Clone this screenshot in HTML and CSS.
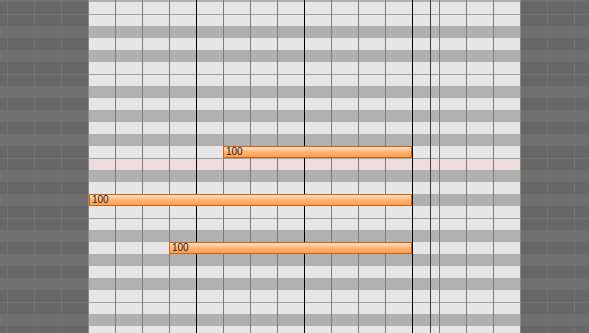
FILE: index.html
```html
<!DOCTYPE html>
<html lang="en">
<head>
    <meta charset="UTF-8">
    <meta name="viewport" content="width=device-width, initial-scale=1.0">
    <title>Piano Roll</title>
    <link rel="stylesheet" href="styles.css">
</head>
<body>
    <div class="roll">
        <div class="rows">
            <div class="row b"></div>
            <div class="row w"></div>
            <div class="row w s"></div>
            <div class="row b"></div>
            <div class="row w"></div>
            <div class="row b"></div>
            <div class="row w"></div>
            <div class="row w s"></div>
            <div class="row b"></div>
            <div class="row w"></div>
            <div class="row b"></div>
            <div class="row w"></div>
            <div class="row b"></div>
            <div class="row w">
                <div class="note" style="margin-left: 223px; width: 189px;">100</div>
            </div>
            <div class="row w s hl"></div>
            <div class="row b"></div>
            <div class="row w"></div>
            <div class="row b">
                <div class="note" style="margin-left: 89px; width: 323px;">100</div>
            </div>
            <div class="row w"></div>
            <div class="row w s"></div>
            <div class="row b"></div>
            <div class="row w">
                <div class="note" style="margin-left: 169px; width: 243px;">100</div>
            </div>
            <div class="row b"></div>
            <div class="row w"></div>
            <div class="row b"></div>
            <div class="row w"></div>
            <div class="row w s"></div>
            <div class="row b"></div>
            <div class="row w"></div>
        </div>

        <!-- beat / bar lines drawn over the lanes -->
        <div class="beats">
            <div class="beat edge"></div>
            <div class="beat"></div>
            <div class="beat"></div>
            <div class="beat"></div>
            <div class="beat bar"></div>
            <div class="beat"></div>
            <div class="beat"></div>
            <div class="beat"></div>
            <div class="beat bar"></div>
            <div class="beat"></div>
            <div class="beat"></div>
            <div class="beat"></div>
            <div class="beat bar"></div>
            <div class="beat"></div>
            <div class="beat"></div>
            <div class="beat"></div>
            <div class="beat edge last"></div>
            <div class="end-marker"></div>
        </div>
    </div>
</body>
</html>
```

FILE: styles.css
```css
body {
    margin: 0;
    padding: 0;
    overflow: hidden;
    background-color: #6a6b6a;
    font-family: "Liberation Sans", Arial, sans-serif;
}

.roll {
    position: relative;
    width: 589px;
    height: 333px;
    overflow: hidden;
}

.rows {
    display: flex;
    flex-direction: column;
    margin-top: -10px;
}

.row {
    --pad: #666766;
    --pad-line: #727372;
    --lane: #e6e6e6;
    height: 12px;
    display: flex;
    align-items: stretch;
    background:
        linear-gradient(90deg, transparent 88px, var(--lane) 88px, var(--lane) 520px, transparent 520px),
        repeating-linear-gradient(90deg, var(--pad) 0, var(--pad) 7px, var(--pad-line) 7px, var(--pad-line) 8px, var(--pad) 8px, var(--pad) 27px);
}

.row.b {
    --pad: #6e6f6e;
    --pad-line: #6e6f6e;
    --lane: #b0b0b0;
}

.row.hl {
    --lane: #ecdcdc;
}

/* split between two white keys (E/F, B/C) */
.row.s {
    background:
        linear-gradient(90deg, #727372 88px, #a2a2a2 88px, #a2a2a2 520px, #727372 520px) top / 100% 1px no-repeat,
        linear-gradient(90deg, transparent 88px, var(--lane) 88px, var(--lane) 520px, transparent 520px),
        repeating-linear-gradient(90deg, var(--pad) 0, var(--pad) 7px, var(--pad-line) 7px, var(--pad-line) 8px, var(--pad) 8px, var(--pad) 27px);
}

.beats {
    position: absolute;
    top: 0;
    bottom: 0;
    left: 88px;
    display: flex;
    z-index: 1;
}

.beat {
    flex: 0 0 27px;
    box-sizing: border-box;
    border-left: 1px solid #7c7c7c;
}

.beat.bar {
    border-left-color: #000;
}

.beat.edge {
    border-left-color: #8a8a8a;
}

.beat.last {
    flex-basis: 1px;
}

.end-marker {
    position: absolute;
    top: 0;
    bottom: 0;
    left: 342px;
    width: 1px;
    background-color: #3e3e3e;
}

.note {
    position: relative;
    z-index: 2;
    box-sizing: border-box;
    height: 12px;
    padding-left: 2px;
    border: 1px solid #cc660e;
    background: linear-gradient(to bottom, #ffe0c2, #ffb577 50%, #ff9d4c);
    color: #222;
    font-size: 10px;
    line-height: 10px;
}
```
